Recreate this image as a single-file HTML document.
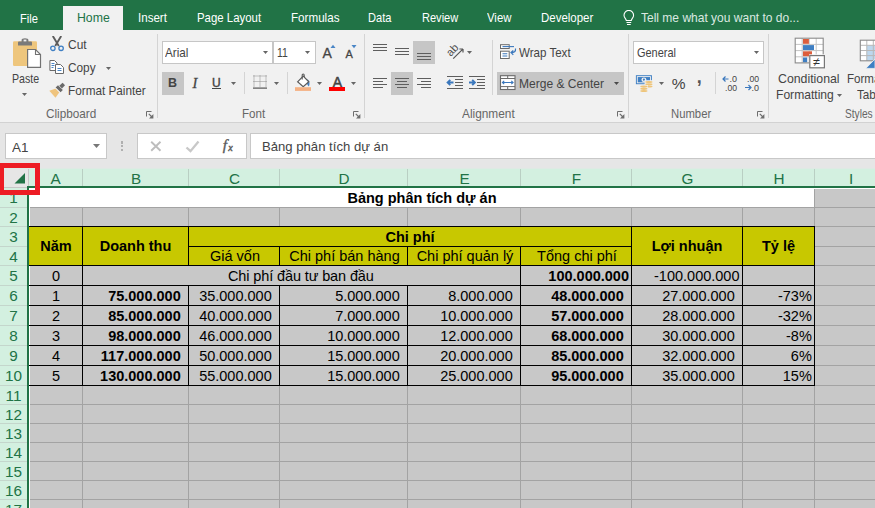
<!DOCTYPE html>
<html><head><meta charset="utf-8"><title>Excel</title>
<style>
*{box-sizing:border-box;margin:0;padding:0}
html,body{width:875px;height:508px;overflow:hidden;background:#e6e6e6;font-family:"Liberation Sans",sans-serif}
.a{position:absolute;display:block}
.t{position:absolute;white-space:nowrap;transform-origin:0 50%}
.c{position:absolute;white-space:nowrap;font-size:14.5px;line-height:19px;color:#000;transform:scaleY(1.03);transform-origin:50% 74%}
.h{transform:none}
.b{font-weight:bold}
</style></head><body>
<div class="a" style="left:0px;top:0px;width:875px;height:30px;background:#217346;"></div>
<div class="a" style="left:63px;top:6px;width:60px;height:24px;background:#f1f1f1;"></div>
<div class="t" style="left:20.4px;top:10px;font-size:13px;line-height:17px;color:#fff;transform:scaleX(0.859);">File</div>
<div class="t" style="left:76.6px;top:9px;font-size:13px;line-height:17px;color:#217346;transform:scaleX(0.943);">Home</div>
<div class="t" style="left:138.1px;top:9px;font-size:13px;line-height:17px;color:#fff;transform:scaleX(0.889);">Insert</div>
<div class="t" style="left:196.7px;top:9px;font-size:13px;line-height:17px;color:#fff;transform:scaleX(0.878);">Page Layout</div>
<div class="t" style="left:290.5px;top:9px;font-size:13px;line-height:17px;color:#fff;transform:scaleX(0.895);">Formulas</div>
<div class="t" style="left:368.4px;top:9px;font-size:13px;line-height:17px;color:#fff;transform:scaleX(0.852);">Data</div>
<div class="t" style="left:421.5px;top:9px;font-size:13px;line-height:17px;color:#fff;transform:scaleX(0.849);">Review</div>
<div class="t" style="left:487.3px;top:9px;font-size:13px;line-height:17px;color:#fff;transform:scaleX(0.873);">View</div>
<div class="t" style="left:541.3px;top:9px;font-size:13px;line-height:17px;color:#fff;transform:scaleX(0.882);">Developer</div>
<svg class="a" style="left:622px;top:10px" width="14" height="17" viewBox="0 0 14 17"><path d="M4.300 10.500C4.300 9 2 8 2 5.200A4.800 4.800 0 0 1 11.600 5.200C11.600 8 9.300 9 9.300 10.500zM4.500 12.500H9.200M5 14.500H8.700" fill="none" stroke="#fff" stroke-width="1.100"/></svg>
<div class="t" style="left:640.6px;top:9px;font-size:13px;line-height:17px;color:#dbe9e1;transform:scaleX(0.924);">Tell me what you want to do...</div>
<div class="a" style="left:0px;top:30px;width:875px;height:92px;background:#f1f1f1;"></div>
<div class="a" style="left:0px;top:122px;width:875px;height:1px;background:#d2d2d2;"></div>
<div class="a" style="left:0px;top:123px;width:875px;height:45px;background:#e6e6e6;"></div>
<div class="t" style="left:11.8px;top:70px;font-size:13px;line-height:17px;color:#444444;transform:scaleX(0.818);">Paste</div>
<svg class="a" style="left:21px;top:92px" width="7" height="6" viewBox="0 0 7 6"><path d="M1 1h5l-2.5 3.0z" fill="#666"/></svg>
<div class="t" style="left:68.4px;top:36px;font-size:13px;line-height:17px;color:#444444;transform:scaleX(0.919);">Cut</div>
<div class="t" style="left:68.4px;top:59px;font-size:13px;line-height:17px;color:#444444;transform:scaleX(0.909);">Copy</div>
<svg class="a" style="left:105px;top:66px" width="7" height="6" viewBox="0 0 7 6"><path d="M1 1h5l-2.5 3.0z" fill="#666"/></svg>
<div class="t" style="left:68.4px;top:82px;font-size:13px;line-height:17px;color:#444444;transform:scaleX(0.904);">Format Painter</div>
<div class="t" style="left:45.5px;top:105px;font-size:13px;line-height:17px;color:#666666;transform:scaleX(0.904);">Clipboard</div>
<svg class="a" style="left:146px;top:110.5px" width="8" height="8" viewBox="0 0 8 8"><path d="M0.5 5.5V0.5H5.5" fill="none" stroke="#6e6e6e" stroke-width="1"/><path d="M2.8 2.8L6 6" fill="none" stroke="#6e6e6e" stroke-width="1.200"/><path d="M7.400 3V7.400H3z" fill="#6e6e6e"/></svg>
<div class="a" style="left:157px;top:34px;width:1px;height:84px;background:#d4d4d4;"></div>
<svg class="a" style="left:12px;top:37px" width="31" height="32" viewBox="0 0 31 32">
<rect x="1" y="4.2" width="24" height="24.8" rx="1.2" fill="#eec67d"/>
<path d="M6 8.4V5.6q0-1 1-1h2.6V3q0-1.8 3.4-1.8T16.400 3V4.600H19q1 0 1 1V8.400z" fill="#7a7a7a"/>
<rect x="11.600" y="2.600" width="2.8" height="1.800" fill="#f1f1f1"/>
<path d="M15.600 12.500h7.900l5 5V30.400H15.600z" fill="#fff" stroke="#727272" stroke-width="1.200"/>
<path d="M23.500 12.500V17.500h5" fill="none" stroke="#727272" stroke-width="1.100"/>
</svg>
<svg class="a" style="left:49px;top:36px" width="16" height="16" viewBox="0 0 16 16">
<path d="M3.800 0L9.800 10M12.200 0L6.200 10" stroke="#5c5c5c" stroke-width="1.900" fill="none"/>
<circle cx="3.900" cy="12.300" r="2.200" fill="#f1f1f1" stroke="#3f7fc3" stroke-width="1.300"/>
<circle cx="12.100" cy="12.300" r="2.200" fill="#f1f1f1" stroke="#3f7fc3" stroke-width="1.300"/>
</svg>
<svg class="a" style="left:49px;top:59px" width="16" height="16" viewBox="0 0 16 16">
<path d="M0.900 1.500H5.500L8 4V11.500H0.900z" fill="#fff" stroke="#6a6a6a" stroke-width="1"/>
<path d="M2.500 4.500h3M2.500 6.500h3M2.500 8.500h2" stroke="#4a86c6" stroke-width="1"/>
<path d="M6.500 5.500H11.500L14.500 8.500V14.500H6.500z" fill="#fff" stroke="#6a6a6a" stroke-width="1"/>
<path d="M8.500 9.500h4M8.500 11.500h4" stroke="#4a86c6" stroke-width="1"/>
</svg>
<svg class="a" style="left:49px;top:82px" width="17" height="16" viewBox="0 0 17 16">
<path d="M0.300 8.800L6.800 6.600L10.400 10.200L6.500 15.800z" fill="#efc47e"/>
<path d="M6.600 5.400L9 3.200L13.800 8L11.600 10.200z" fill="#6a6a6a"/>
<path d="M10.300 3.800L13.600 0.800L16 3.200L13 6.500z" fill="#6a6a6a"/>
<path d="M6.400 6L10.900 10.600" stroke="#f1f1f1" stroke-width="0.900"/>
</svg>
<div class="a" style="left:162px;top:41px;width:111px;height:23px;background:#fff;border:1px solid #c6c6c6"></div>
<div class="t" style="left:165.2px;top:44px;font-size:13px;line-height:17px;color:#444444;transform:scaleX(0.899);">Arial</div>
<svg class="a" style="left:262px;top:50px" width="7" height="6" viewBox="0 0 7 6"><path d="M1 1h5l-2.5 3.0z" fill="#666"/></svg>
<div class="a" style="left:273px;top:41px;width:43px;height:23px;background:#fff;border:1px solid #c6c6c6"></div>
<div class="t" style="left:276.6px;top:44px;font-size:13px;line-height:17px;color:#444444;transform:scaleX(0.800);">11</div>
<svg class="a" style="left:304px;top:50px" width="7" height="6" viewBox="0 0 7 6"><path d="M1 1h5l-2.5 3.0z" fill="#666"/></svg>
<div class="t" style="left:307.1px;width:40px;text-align:center;top:44px;font-size:14px;line-height:18px;color:#444444;-webkit-text-stroke:0.3px #444;">A</div>
<svg class="a" style="left:330px;top:44px" width="6" height="5" viewBox="0 0 6 5"><path d="M0.500 4L3 0.800L5.500 4z" fill="#4a86c6"/></svg>
<div class="t" style="left:329.1px;width:40px;text-align:center;top:47px;font-size:11px;line-height:14px;color:#444444;-webkit-text-stroke:0.3px #444;">A</div>
<svg class="a" style="left:351px;top:44px" width="6" height="5" viewBox="0 0 6 5"><path d="M0.500 1L3 4.200L5.500 1z" fill="#4a86c6"/></svg>
<div class="a" style="left:162px;top:72px;width:22px;height:23px;background:#c6c6c6;"></div>
<div class="t" style="left:152.4px;width:40px;text-align:center;top:75px;font-size:12.5px;line-height:16px;color:#444444;font-weight:bold;">B</div>
<div class="t" style="left:175.0px;width:40px;text-align:center;top:74px;font-size:14.5px;line-height:19px;color:#444444;font-style:italic;font-family:'Liberation Serif',serif;-webkit-text-stroke:0.3px #444;">I</div>
<div class="t" style="left:196.4px;width:40px;text-align:center;top:75px;font-size:12px;line-height:16px;color:#444444;-webkit-text-stroke:0.4px #444;">U</div>
<div class="a" style="left:212px;top:88px;width:9px;height:1px;background:#444444;"></div>
<svg class="a" style="left:230px;top:81px" width="7" height="6" viewBox="0 0 7 6"><path d="M1 1h5l-2.5 3.0z" fill="#666"/></svg>
<div class="a" style="left:244px;top:72px;width:1px;height:22px;background:#d4d4d4;"></div>
<svg class="a" style="left:253px;top:75px" width="15" height="15" viewBox="0 0 15 15">
<rect x="0.5" y="0.5" width="1" height="1" fill="#8c8c8c"/><rect x="0.5" y="2.5" width="1" height="1" fill="#8c8c8c"/><rect x="0.5" y="4.5" width="1" height="1" fill="#8c8c8c"/><rect x="0.5" y="6.5" width="1" height="1" fill="#8c8c8c"/><rect x="0.5" y="8.5" width="1" height="1" fill="#8c8c8c"/><rect x="0.5" y="10.5" width="1" height="1" fill="#8c8c8c"/><rect x="6.5" y="0.5" width="1" height="1" fill="#8c8c8c"/><rect x="6.5" y="2.5" width="1" height="1" fill="#8c8c8c"/><rect x="6.5" y="4.5" width="1" height="1" fill="#8c8c8c"/><rect x="6.5" y="6.5" width="1" height="1" fill="#8c8c8c"/><rect x="6.5" y="8.5" width="1" height="1" fill="#8c8c8c"/><rect x="6.5" y="10.5" width="1" height="1" fill="#8c8c8c"/><rect x="12.5" y="0.5" width="1" height="1" fill="#8c8c8c"/><rect x="12.5" y="2.5" width="1" height="1" fill="#8c8c8c"/><rect x="12.5" y="4.5" width="1" height="1" fill="#8c8c8c"/><rect x="12.5" y="6.5" width="1" height="1" fill="#8c8c8c"/><rect x="12.5" y="8.5" width="1" height="1" fill="#8c8c8c"/><rect x="12.5" y="10.5" width="1" height="1" fill="#8c8c8c"/><rect x="0.5" y="0.5" width="1" height="1" fill="#8c8c8c"/><rect x="2.5" y="0.5" width="1" height="1" fill="#8c8c8c"/><rect x="4.5" y="0.5" width="1" height="1" fill="#8c8c8c"/><rect x="6.5" y="0.5" width="1" height="1" fill="#8c8c8c"/><rect x="8.5" y="0.5" width="1" height="1" fill="#8c8c8c"/><rect x="10.5" y="0.5" width="1" height="1" fill="#8c8c8c"/><rect x="12.5" y="0.5" width="1" height="1" fill="#8c8c8c"/><rect x="0.5" y="6" width="1" height="1" fill="#8c8c8c"/><rect x="2.5" y="6" width="1" height="1" fill="#8c8c8c"/><rect x="4.5" y="6" width="1" height="1" fill="#8c8c8c"/><rect x="6.5" y="6" width="1" height="1" fill="#8c8c8c"/><rect x="8.5" y="6" width="1" height="1" fill="#8c8c8c"/><rect x="10.5" y="6" width="1" height="1" fill="#8c8c8c"/><rect x="12.5" y="6" width="1" height="1" fill="#8c8c8c"/>
<rect x="0" y="12.500" width="14" height="1.200" fill="#555"/>
</svg>
<svg class="a" style="left:273px;top:81px" width="7" height="6" viewBox="0 0 7 6"><path d="M1 1h5l-2.5 3.0z" fill="#666"/></svg>
<div class="a" style="left:287px;top:72px;width:1px;height:22px;background:#d4d4d4;"></div>
<svg class="a" style="left:294px;top:73px" width="19" height="19" viewBox="0 0 19 19">
<path d="M13.600 6.200q3 3 1.300 7.200q-1.800-1.500-2.300-4.500z" fill="#3f7fc3"/>
<path d="M3.600 8.800L9.200 3.200L14.800 8.800L9.200 13.600z" fill="#fff" stroke="#5a5a5a" stroke-width="1.200"/>
<path d="M8.200 6.500V2.200q0-1.200 1-1.200q1 0 1 1.200V4" fill="none" stroke="#5a5a5a" stroke-width="1.100"/>
<rect x="1" y="14.200" width="16" height="3.700" fill="#f4b183"/>
</svg>
<svg class="a" style="left:316px;top:81px" width="7" height="6" viewBox="0 0 7 6"><path d="M1 1h5l-2.5 3.0z" fill="#666"/></svg>
<div class="t" style="left:317.4px;width:40px;text-align:center;top:73px;font-size:14px;line-height:18px;color:#444444;-webkit-text-stroke:0.5px #444;">A</div>
<div class="a" style="left:329px;top:87px;width:16px;height:4px;background:#ff0000;"></div>
<svg class="a" style="left:350px;top:81px" width="7" height="6" viewBox="0 0 7 6"><path d="M1 1h5l-2.5 3.0z" fill="#666"/></svg>
<div class="t" style="left:241.6px;top:105px;font-size:13px;line-height:17px;color:#666666;transform:scaleX(0.892);">Font</div>
<svg class="a" style="left:353px;top:110.5px" width="8" height="8" viewBox="0 0 8 8"><path d="M0.5 5.5V0.5H5.5" fill="none" stroke="#6e6e6e" stroke-width="1"/><path d="M2.8 2.8L6 6" fill="none" stroke="#6e6e6e" stroke-width="1.200"/><path d="M7.400 3V7.400H3z" fill="#6e6e6e"/></svg>
<div class="a" style="left:364px;top:34px;width:1px;height:84px;background:#d4d4d4;"></div>
<svg class="a" style="left:373px;top:44px" width="14" height="9" viewBox="0 0 14 9"><rect x="0" y="0" width="14" height="1" fill="#5e5e5e"/><rect x="0" y="3" width="14" height="1" fill="#5e5e5e"/><rect x="0" y="6" width="14" height="1" fill="#5e5e5e"/></svg>
<svg class="a" style="left:395px;top:48px" width="14" height="9" viewBox="0 0 14 9"><rect x="0" y="0" width="14" height="1" fill="#5e5e5e"/><rect x="0" y="3" width="14" height="1" fill="#5e5e5e"/><rect x="0" y="6" width="14" height="1" fill="#5e5e5e"/></svg>
<div class="a" style="left:413px;top:41px;width:22px;height:23px;background:#c6c6c6;"></div>
<svg class="a" style="left:417px;top:53px" width="14" height="9" viewBox="0 0 14 9"><rect x="0" y="0" width="14" height="1" fill="#5e5e5e"/><rect x="0" y="3" width="14" height="1" fill="#5e5e5e"/><rect x="0" y="6" width="14" height="1" fill="#5e5e5e"/></svg>
<svg class="a" style="left:373px;top:78px" width="14" height="12" viewBox="0 0 14 12"><rect x="0" y="0" width="14" height="1" fill="#5e5e5e"/><rect x="0" y="3" width="10" height="1" fill="#5e5e5e"/><rect x="0" y="6" width="14" height="1" fill="#5e5e5e"/><rect x="0" y="9" width="10" height="1" fill="#5e5e5e"/></svg>
<div class="a" style="left:391px;top:72px;width:22px;height:23px;background:#c6c6c6;"></div>
<svg class="a" style="left:395px;top:78px" width="14" height="12" viewBox="0 0 14 12"><rect x="0.0" y="0" width="14" height="1" fill="#5e5e5e"/><rect x="2.0" y="3" width="10" height="1" fill="#5e5e5e"/><rect x="0.0" y="6" width="14" height="1" fill="#5e5e5e"/><rect x="2.0" y="9" width="10" height="1" fill="#5e5e5e"/></svg>
<svg class="a" style="left:417px;top:78px" width="14" height="12" viewBox="0 0 14 12"><rect x="0" y="0" width="14" height="1" fill="#5e5e5e"/><rect x="4" y="3" width="10" height="1" fill="#5e5e5e"/><rect x="0" y="6" width="14" height="1" fill="#5e5e5e"/><rect x="4" y="9" width="10" height="1" fill="#5e5e5e"/></svg>
<svg class="a" style="left:446px;top:44px" width="20" height="16" viewBox="0 0 20 16">
<text x="0" y="0" font-family="Liberation Sans, sans-serif" font-size="11" fill="#4d4d4d" transform="translate(4.800 13) rotate(-47)">ab</text>
<path d="M7.200 14.700L16.600 5.300M17 5h-3.600M17 5v3.600" stroke="#555" stroke-width="1.200" fill="none"/>
</svg>
<svg class="a" style="left:466px;top:50px" width="7" height="6" viewBox="0 0 7 6"><path d="M1 1h5l-2.5 3.0z" fill="#666"/></svg>
<svg class="a" style="left:446px;top:75px" width="18" height="15" viewBox="0 0 18 15">
<path d="M1 1.500H17M9 4.500H17M9 7.500H17M9 10.500H17M1 13.500H17" stroke="#5e5e5e" stroke-width="1"/>
<path d="M7.500 7.500H1.800M4.300 4.800L1.600 7.500L4.300 10.200" stroke="#3b78bd" stroke-width="1.900" fill="none"/>
</svg>
<svg class="a" style="left:468px;top:75px" width="18" height="15" viewBox="0 0 18 15">
<path d="M1 1.500H17M9 4.500H17M9 7.500H17M9 10.500H17M1 13.500H17" stroke="#5e5e5e" stroke-width="1"/>
<path d="M1 7.500H6.700M4.200 4.800L6.900 7.500L4.200 10.200" stroke="#3b78bd" stroke-width="1.900" fill="none"/>
</svg>
<div class="a" style="left:492px;top:40px;width:1px;height:55px;background:#d4d4d4;"></div>
<svg class="a" style="left:499px;top:43px" width="18" height="17" viewBox="0 0 18 17">
<rect x="1.500" y="1.700" width="8.700" height="3.800" fill="#fff" stroke="#6a6a6a"/>
<path d="M3.500 3.600H15" stroke="#3b78bd" stroke-width="1.100"/>
<rect x="1.500" y="8.200" width="8.700" height="7.300" fill="#fff" stroke="#6a6a6a"/>
<path d="M3.500 10.700H8.300M3.500 13H8.300" stroke="#3b78bd" stroke-width="1.100"/>
<path d="M16.500 5.500C17 8.500 15 9.600 12.200 9.600M14.300 7.500L12 9.600L14.300 11.800" stroke="#3b78bd" stroke-width="1.200" fill="none"/>
</svg>
<div class="t" style="left:519.2px;top:44px;font-size:13px;line-height:17px;color:#444444;transform:scaleX(0.889);">Wrap Text</div>
<div class="a" style="left:497px;top:72px;width:127px;height:23px;background:#c6c6c6;"></div>
<svg class="a" style="left:499px;top:75px" width="17" height="16" viewBox="0 0 17 16">
<rect x="1.500" y="0.700" width="14.500" height="13.800" fill="#fff" stroke="#6a6a6a" stroke-width="1.100"/>
<path d="M1.500 3.500H16M1.500 11.600H16M8.700 0.700V3.500M8.700 11.600V14.500" stroke="#6a6a6a" stroke-width="1"/>
<path d="M3.500 7.500H14M5.200 5.800L3.400 7.500L5.200 9.200M12.300 5.800L14.100 7.500L12.300 9.200" stroke="#3b78bd" stroke-width="1.100" fill="none"/>
</svg>
<div class="t" style="left:519.2px;top:75px;font-size:13px;line-height:17px;color:#444444;transform:scaleX(0.926);">Merge &amp; Center</div>
<svg class="a" style="left:613px;top:81px" width="7" height="6" viewBox="0 0 7 6"><path d="M1 1h5l-2.5 3.0z" fill="#4a4a4a"/></svg>
<div class="t" style="left:462.0px;top:105px;font-size:13px;line-height:17px;color:#666666;transform:scaleX(0.912);">Alignment</div>
<svg class="a" style="left:617px;top:110.5px" width="8" height="8" viewBox="0 0 8 8"><path d="M0.5 5.5V0.5H5.5" fill="none" stroke="#6e6e6e" stroke-width="1"/><path d="M2.8 2.8L6 6" fill="none" stroke="#6e6e6e" stroke-width="1.200"/><path d="M7.400 3V7.400H3z" fill="#6e6e6e"/></svg>
<div class="a" style="left:628px;top:34px;width:1px;height:84px;background:#d4d4d4;"></div>
<div class="a" style="left:633px;top:41px;width:131px;height:23px;background:#fff;border:1px solid #c6c6c6"></div>
<div class="t" style="left:636.6px;top:44px;font-size:13px;line-height:17px;color:#444444;transform:scaleX(0.843);">General</div>
<svg class="a" style="left:753px;top:50px" width="7" height="6" viewBox="0 0 7 6"><path d="M1 1h5l-2.5 3.0z" fill="#666"/></svg>
<svg class="a" style="left:635px;top:75px" width="19" height="18" viewBox="0 0 19 18">
<rect x="0.900" y="0.200" width="16" height="9" fill="#3f7fc3"/>
<rect x="2.300" y="1.600" width="13.200" height="6.200" fill="none" stroke="#f1f1f1" stroke-width="0.900"/>
<ellipse cx="8.900" cy="4.700" rx="2.500" ry="2.300" fill="#f1f1f1"/>
<circle cx="8.900" cy="4.700" r="1.100" fill="#3f7fc3"/>
<rect x="9.600" y="5.200" width="8.500" height="7.500" fill="#f1f1f1"/>
<ellipse cx="13.900" cy="7" rx="3.600" ry="1.100" fill="#eec57b"/>
<ellipse cx="13.900" cy="9.300" rx="3.600" ry="1.100" fill="#eec57b"/>
<ellipse cx="13.900" cy="11.500" rx="3.600" ry="1.100" fill="#eec57b"/>
<rect x="4.800" y="10" width="8" height="6.500" fill="#f1f1f1"/>
<ellipse cx="8.900" cy="11.600" rx="3.600" ry="1.100" fill="#eec57b"/>
<ellipse cx="8.900" cy="13.800" rx="3.600" ry="1.100" fill="#eec57b"/>
<ellipse cx="8.900" cy="16" rx="3.600" ry="1.100" fill="#eec57b"/>
</svg>
<svg class="a" style="left:658px;top:81px" width="7" height="6" viewBox="0 0 7 6"><path d="M1 1h5l-2.5 3.0z" fill="#666"/></svg>
<div class="t" style="left:658.6px;width:40px;text-align:center;top:74px;font-size:15.5px;line-height:20px;color:#444444;">%</div>
<div class="t" style="left:679.3px;width:40px;text-align:center;top:66px;font-size:18px;line-height:23px;color:#555;font-weight:bold;">,</div>
<div class="a" style="left:715px;top:72px;width:1px;height:22px;background:#d4d4d4;"></div>
<svg class="a" style="left:722px;top:75px" width="17" height="17" viewBox="0 0 17 17">
<text x="7.500" y="7.300" font-family="Liberation Sans, sans-serif" font-size="9" fill="#444" textLength="7.500" lengthAdjust="spacingAndGlyphs">.0</text>
<text x="3" y="15.500" font-family="Liberation Sans, sans-serif" font-size="9" fill="#444" textLength="12" lengthAdjust="spacingAndGlyphs">.00</text>
<path d="M6.500 4H1M3.500 1.500L1 4L3.500 6.500" stroke="#3b78bd" stroke-width="1.200" fill="none"/>
</svg>
<svg class="a" style="left:744px;top:75px" width="17" height="17" viewBox="0 0 17 17">
<text x="3" y="7.300" font-family="Liberation Sans, sans-serif" font-size="9" fill="#444" textLength="12" lengthAdjust="spacingAndGlyphs">.00</text>
<text x="7.500" y="15.500" font-family="Liberation Sans, sans-serif" font-size="9" fill="#444" textLength="7.500" lengthAdjust="spacingAndGlyphs">.0</text>
<path d="M1 12.500H7M4.500 10L7 12.500L4.500 15" stroke="#3b78bd" stroke-width="1.200" fill="none"/>
</svg>
<div class="t" style="left:670.6px;top:105px;font-size:13px;line-height:17px;color:#666666;transform:scaleX(0.869);">Number</div>
<svg class="a" style="left:757px;top:110.5px" width="8" height="8" viewBox="0 0 8 8"><path d="M0.5 5.5V0.5H5.5" fill="none" stroke="#6e6e6e" stroke-width="1"/><path d="M2.8 2.8L6 6" fill="none" stroke="#6e6e6e" stroke-width="1.200"/><path d="M7.400 3V7.400H3z" fill="#6e6e6e"/></svg>
<div class="a" style="left:768px;top:34px;width:1px;height:84px;background:#d4d4d4;"></div>
<svg class="a" style="left:794px;top:37px" width="32" height="32" viewBox="0 0 32 32">
<rect x="1.200" y="1.200" width="28" height="24.700" fill="#fff"/>
<path d="M1.200 7.400H29.200M1.200 13.600H29.200M1.200 19.800H29.200M8.200 1.200V25.900M15.200 1.200V25.900M22.200 1.200V25.900" stroke="#c4c4c4" stroke-width="1" fill="none"/>
<rect x="9" y="2" width="5.900" height="4.800" fill="#dc5e3c"/>
<rect x="9" y="8.100" width="11" height="4.900" fill="#3f7fc3"/>
<rect x="9" y="14.300" width="9" height="4.900" fill="#dc5e3c"/>
<rect x="9" y="20.500" width="4.200" height="4.900" fill="#3f7fc3"/>
<rect x="1.200" y="1.200" width="28" height="24.700" fill="none" stroke="#8a8a8a" stroke-width="1.100"/>
<rect x="15" y="17.300" width="17" height="14.500" fill="#f1f1f1"/>
<rect x="15.800" y="18.600" width="14.600" height="12.200" fill="#fff" stroke="#777" stroke-width="1.200"/>
<text x="19.200" y="29.300" font-family="Liberation Sans, sans-serif" font-size="12.500" fill="#333">≠</text>
</svg>
<div class="t" style="left:778.2px;top:70px;font-size:13px;line-height:17px;color:#444444;transform:scaleX(0.947);">Conditional</div>
<div class="t" style="left:775.7px;top:86px;font-size:13px;line-height:17px;color:#444444;transform:scaleX(0.930);">Formatting</div>
<svg class="a" style="left:836px;top:93px" width="7" height="6" viewBox="0 0 7 6"><path d="M1 1h5l-2.5 3.0z" fill="#666"/></svg>
<div class="t" style="left:847.4px;top:70px;font-size:13px;line-height:17px;color:#444444;transform:scaleX(0.890);">Format as</div>
<div class="t" style="left:857.0px;top:86px;font-size:13px;line-height:17px;color:#444444;transform:scaleX(0.901);">Table</div>
<svg class="a" style="left:859px;top:39px" width="16" height="30" viewBox="0 0 16 30">
<rect x="1.300" y="1.200" width="20" height="20.600" fill="#fff"/>
<rect x="7.800" y="6.300" width="14" height="15.500" fill="#bdd7ee"/>
<path d="M1.300 6.300H22M1.300 11.500H22M1.300 16.600H22M7.800 1.200V21.800M14.300 1.200V21.800" stroke="#b8b8b8" stroke-width="1" fill="none"/>
<rect x="1.300" y="1.200" width="20" height="20.600" fill="none" stroke="#8a8a8a" stroke-width="1.100"/>
<path d="M6.800 29.400L16 20V29.400z" fill="#3f7fc3" stroke="#f1f1f1" stroke-width="0.800"/>
</svg>
<div class="t" style="left:844.6px;top:105px;font-size:13px;line-height:17px;color:#666666;transform:scaleX(0.780);">Styles</div>
<div class="a" style="left:5px;top:133px;width:102px;height:26px;background:#fff;border:1px solid #c8c8c8"></div>
<div class="t" style="left:11.8px;top:139px;font-size:13px;line-height:17px;color:#444444;transform:scaleX(1.031);">A1</div>
<svg class="a" style="left:92px;top:143px" width="9" height="7" viewBox="0 0 9 7"><path d="M1 1h7l-3.5 4.0z" fill="#777"/></svg>
<div class="a" style="left:120.7px;top:141.4px;width:2.3px;height:2.2px;background:#b0b0b0;"></div>
<div class="a" style="left:120.7px;top:145.2px;width:2.3px;height:2.2px;background:#b0b0b0;"></div>
<div class="a" style="left:120.7px;top:149px;width:2.3px;height:2.2px;background:#b0b0b0;"></div>
<div class="a" style="left:137px;top:133px;width:110px;height:26px;background:#fff;border:1px solid #c8c8c8"></div>
<svg class="a" style="left:150px;top:140px" width="12" height="12" viewBox="0 0 12 12"><path d="M1.200 1.800L10.500 10.800M10.500 1.800L1.200 10.800" stroke="#bdbdbd" stroke-width="1.900" fill="none"/></svg>
<svg class="a" style="left:185px;top:140px" width="15" height="13" viewBox="0 0 15 13"><path d="M1.500 7.500L5.500 11.200L13.500 1.500" stroke="#c8c8c8" stroke-width="2.300" fill="none"/></svg>
<svg class="a" style="left:220px;top:136px" width="18" height="20" viewBox="0 0 18 20"><text x="2.800" y="13.800" font-family="Liberation Serif, serif" font-style="italic" font-size="15.500" fill="#5a5a5a" stroke="#5a5a5a" stroke-width="0.350">f</text><text x="8.300" y="14.600" font-family="Liberation Serif, serif" font-style="italic" font-size="10" fill="#5a5a5a" stroke="#5a5a5a" stroke-width="0.400">x</text></svg>
<div class="a" style="left:250px;top:133px;width:640px;height:26px;background:#fff;border:1px solid #c8c8c8"></div>
<div class="t" style="left:262.3px;top:138px;font-size:13px;line-height:17px;color:#444444;transform:scaleX(1.009);">Bảng phân tích dự án</div>
<div class="a" style="left:0px;top:168px;width:875px;height:1px;background:#dfeae4;"></div>
<div class="a" style="left:0px;top:186px;width:875px;height:322px;background:#c8c8c8;"></div>
<div class="a" style="left:0px;top:169px;width:875px;height:17px;background:#d3f0e0;"></div>
<div class="a" style="left:0px;top:186px;width:27px;height:322px;background:#d3f0e0;"></div>
<div class="a" style="left:0px;top:169px;width:28px;height:18px;background:#e6e6e6;"></div>
<div class="a" style="left:0px;top:187px;width:27px;height:1px;background:#c6c6c6;"></div>
<div class="a" style="left:82px;top:169px;width:1px;height:17px;background:#b9cfc3;"></div>
<div class="a" style="left:188px;top:169px;width:1px;height:17px;background:#b9cfc3;"></div>
<div class="a" style="left:279px;top:169px;width:1px;height:17px;background:#b9cfc3;"></div>
<div class="a" style="left:407px;top:169px;width:1px;height:17px;background:#b9cfc3;"></div>
<div class="a" style="left:520px;top:169px;width:1px;height:17px;background:#b9cfc3;"></div>
<div class="a" style="left:631px;top:169px;width:1px;height:17px;background:#b9cfc3;"></div>
<div class="a" style="left:742px;top:169px;width:1px;height:17px;background:#b9cfc3;"></div>
<div class="a" style="left:814px;top:169px;width:1px;height:17px;background:#b9cfc3;"></div>
<div class="a" style="left:28px;top:169px;width:1px;height:17px;background:#c6c6c6;"></div>
<div class="a" style="left:0px;top:207px;width:27px;height:1px;background:#c4d6cc;"></div>
<div class="a" style="left:0px;top:226px;width:27px;height:1px;background:#c4d6cc;"></div>
<div class="a" style="left:0px;top:246px;width:27px;height:1px;background:#c4d6cc;"></div>
<div class="a" style="left:0px;top:265px;width:27px;height:1px;background:#c4d6cc;"></div>
<div class="a" style="left:0px;top:285px;width:27px;height:1px;background:#c4d6cc;"></div>
<div class="a" style="left:0px;top:305px;width:27px;height:1px;background:#c4d6cc;"></div>
<div class="a" style="left:0px;top:325px;width:27px;height:1px;background:#c4d6cc;"></div>
<div class="a" style="left:0px;top:345px;width:27px;height:1px;background:#c4d6cc;"></div>
<div class="a" style="left:0px;top:365px;width:27px;height:1px;background:#c4d6cc;"></div>
<div class="a" style="left:0px;top:385px;width:27px;height:1px;background:#c4d6cc;"></div>
<div class="a" style="left:0px;top:404px;width:27px;height:1px;background:#c4d6cc;"></div>
<div class="a" style="left:0px;top:423px;width:27px;height:1px;background:#c4d6cc;"></div>
<div class="a" style="left:0px;top:442px;width:27px;height:1px;background:#c4d6cc;"></div>
<div class="a" style="left:0px;top:461px;width:27px;height:1px;background:#c4d6cc;"></div>
<div class="a" style="left:0px;top:480px;width:27px;height:1px;background:#c4d6cc;"></div>
<div class="a" style="left:0px;top:499px;width:27px;height:1px;background:#c4d6cc;"></div>
<div class="a" style="left:0px;top:518px;width:27px;height:1px;background:#c4d6cc;"></div>
<div class="a" style="left:27px;top:186px;width:848px;height:2px;background:#217346;"></div>
<div class="a" style="left:27px;top:186px;width:2px;height:322px;background:#217346;"></div>
<div class="a" style="left:82px;top:188px;width:1px;height:320px;background:#a3a3a3;"></div>
<div class="a" style="left:188px;top:188px;width:1px;height:320px;background:#a3a3a3;"></div>
<div class="a" style="left:279px;top:188px;width:1px;height:320px;background:#a3a3a3;"></div>
<div class="a" style="left:407px;top:188px;width:1px;height:320px;background:#a3a3a3;"></div>
<div class="a" style="left:520px;top:188px;width:1px;height:320px;background:#a3a3a3;"></div>
<div class="a" style="left:631px;top:188px;width:1px;height:320px;background:#a3a3a3;"></div>
<div class="a" style="left:742px;top:188px;width:1px;height:320px;background:#a3a3a3;"></div>
<div class="a" style="left:814px;top:188px;width:1px;height:320px;background:#a3a3a3;"></div>
<div class="a" style="left:29px;top:207px;width:846px;height:1px;background:#a3a3a3;"></div>
<div class="a" style="left:29px;top:226px;width:846px;height:1px;background:#a3a3a3;"></div>
<div class="a" style="left:29px;top:246px;width:846px;height:1px;background:#a3a3a3;"></div>
<div class="a" style="left:29px;top:265px;width:846px;height:1px;background:#a3a3a3;"></div>
<div class="a" style="left:29px;top:285px;width:846px;height:1px;background:#a3a3a3;"></div>
<div class="a" style="left:29px;top:305px;width:846px;height:1px;background:#a3a3a3;"></div>
<div class="a" style="left:29px;top:325px;width:846px;height:1px;background:#a3a3a3;"></div>
<div class="a" style="left:29px;top:345px;width:846px;height:1px;background:#a3a3a3;"></div>
<div class="a" style="left:29px;top:365px;width:846px;height:1px;background:#a3a3a3;"></div>
<div class="a" style="left:29px;top:385px;width:846px;height:1px;background:#a3a3a3;"></div>
<div class="a" style="left:29px;top:404px;width:846px;height:1px;background:#a3a3a3;"></div>
<div class="a" style="left:29px;top:423px;width:846px;height:1px;background:#a3a3a3;"></div>
<div class="a" style="left:29px;top:442px;width:846px;height:1px;background:#a3a3a3;"></div>
<div class="a" style="left:29px;top:461px;width:846px;height:1px;background:#a3a3a3;"></div>
<div class="a" style="left:29px;top:480px;width:846px;height:1px;background:#a3a3a3;"></div>
<div class="a" style="left:29px;top:499px;width:846px;height:1px;background:#a3a3a3;"></div>
<div class="a" style="left:29px;top:518px;width:846px;height:1px;background:#a3a3a3;"></div>
<div class="a" style="left:29px;top:188px;width:846px;height:1px;background:#fff;"></div>
<div class="a" style="left:29px;top:188px;width:1px;height:320px;background:#fff;"></div>
<div class="a" style="left:29px;top:188px;width:785px;height:19px;background:#fff;"></div>
<div class="a" style="left:83px;top:266px;width:437px;height:19px;background:#c8c8c8;"></div>
<div class="a" style="left:29px;top:227px;width:785px;height:38px;background:#c8c800;"></div>
<div class="a" style="left:29px;top:226px;width:786px;height:1px;background:#000;"></div>
<div class="a" style="left:29px;top:265px;width:786px;height:1px;background:#000;"></div>
<div class="a" style="left:29px;top:285px;width:786px;height:1px;background:#000;"></div>
<div class="a" style="left:29px;top:305px;width:786px;height:1px;background:#000;"></div>
<div class="a" style="left:29px;top:325px;width:786px;height:1px;background:#000;"></div>
<div class="a" style="left:29px;top:345px;width:786px;height:1px;background:#000;"></div>
<div class="a" style="left:29px;top:365px;width:786px;height:1px;background:#000;"></div>
<div class="a" style="left:29px;top:385px;width:786px;height:1px;background:#000;"></div>
<div class="a" style="left:188px;top:246px;width:443px;height:1px;background:#000;"></div>
<div class="a" style="left:82px;top:226px;width:1px;height:160px;background:#000;"></div>
<div class="a" style="left:631px;top:226px;width:1px;height:160px;background:#000;"></div>
<div class="a" style="left:742px;top:226px;width:1px;height:160px;background:#000;"></div>
<div class="a" style="left:814px;top:226px;width:1px;height:160px;background:#000;"></div>
<div class="a" style="left:188px;top:226px;width:1px;height:40px;background:#000;"></div>
<div class="a" style="left:188px;top:285px;width:1px;height:101px;background:#000;"></div>
<div class="a" style="left:279px;top:246px;width:1px;height:20px;background:#000;"></div>
<div class="a" style="left:279px;top:285px;width:1px;height:101px;background:#000;"></div>
<div class="a" style="left:407px;top:246px;width:1px;height:20px;background:#000;"></div>
<div class="a" style="left:407px;top:285px;width:1px;height:101px;background:#000;"></div>
<div class="a" style="left:520px;top:246px;width:1px;height:20px;background:#000;"></div>
<div class="a" style="left:520px;top:285px;width:1px;height:101px;background:#000;"></div>
<div class="a" style="left:520px;top:265px;width:1px;height:20px;background:#000;"></div>
<div class="t h" style="left:29px;width:53px;top:169px;text-align:center;font-size:15.3px;line-height:19px;color:#217346">A</div>
<div class="t h" style="left:83px;width:106px;top:169px;text-align:center;font-size:15.3px;line-height:19px;color:#217346">B</div>
<div class="t h" style="left:189px;width:91px;top:169px;text-align:center;font-size:15.3px;line-height:19px;color:#217346">C</div>
<div class="t h" style="left:280px;width:128px;top:169px;text-align:center;font-size:15.3px;line-height:19px;color:#217346">D</div>
<div class="t h" style="left:408px;width:113px;top:169px;text-align:center;font-size:15.3px;line-height:19px;color:#217346">E</div>
<div class="t h" style="left:521px;width:111px;top:169px;text-align:center;font-size:15.3px;line-height:19px;color:#217346">F</div>
<div class="t h" style="left:632px;width:111px;top:169px;text-align:center;font-size:15.3px;line-height:19px;color:#217346">G</div>
<div class="t h" style="left:743px;width:72px;top:169px;text-align:center;font-size:15.3px;line-height:19px;color:#217346">H</div>
<div class="t h" style="left:815px;width:72px;top:169px;text-align:center;font-size:15.3px;line-height:19px;color:#217346">I</div>
<div class="t h" style="left:0;width:27px;top:187.3px;text-align:center;font-size:15.3px;line-height:21px;color:#217346">1</div>
<div class="t h" style="left:0;width:27px;top:207px;text-align:center;font-size:15.3px;line-height:21px;color:#217346">2</div>
<div class="t h" style="left:0;width:27px;top:226px;text-align:center;font-size:15.3px;line-height:22px;color:#217346">3</div>
<div class="t h" style="left:0;width:27px;top:246px;text-align:center;font-size:15.3px;line-height:21px;color:#217346">4</div>
<div class="t h" style="left:0;width:27px;top:265px;text-align:center;font-size:15.3px;line-height:22px;color:#217346">5</div>
<div class="t h" style="left:0;width:27px;top:285px;text-align:center;font-size:15.3px;line-height:22px;color:#217346">6</div>
<div class="t h" style="left:0;width:27px;top:305px;text-align:center;font-size:15.3px;line-height:22px;color:#217346">7</div>
<div class="t h" style="left:0;width:27px;top:325px;text-align:center;font-size:15.3px;line-height:22px;color:#217346">8</div>
<div class="t h" style="left:0;width:27px;top:345px;text-align:center;font-size:15.3px;line-height:22px;color:#217346">9</div>
<div class="t h" style="left:0;width:27px;top:365px;text-align:center;font-size:15.3px;line-height:22px;color:#217346">10</div>
<div class="t h" style="left:0;width:27px;top:385px;text-align:center;font-size:15.3px;line-height:21px;color:#217346">11</div>
<div class="t h" style="left:0;width:27px;top:404px;text-align:center;font-size:15.3px;line-height:21px;color:#217346">12</div>
<div class="t h" style="left:0;width:27px;top:423px;text-align:center;font-size:15.3px;line-height:21px;color:#217346">13</div>
<div class="t h" style="left:0;width:27px;top:442px;text-align:center;font-size:15.3px;line-height:21px;color:#217346">14</div>
<div class="t h" style="left:0;width:27px;top:461px;text-align:center;font-size:15.3px;line-height:21px;color:#217346">15</div>
<div class="t h" style="left:0;width:27px;top:480px;text-align:center;font-size:15.3px;line-height:21px;color:#217346">16</div>
<div class="t h" style="left:0;width:27px;top:499px;text-align:center;font-size:15.3px;line-height:21px;color:#217346">17</div>
<div class="c b" style="left:30px;top:189px;width:784px;height:18px;line-height:19px;text-align:center;">Bảng phân tích dự án</div>
<div class="c b" style="left:30px;top:227px;width:52px;height:38px;line-height:39px;text-align:center;">Năm</div>
<div class="c b" style="left:83px;top:227px;width:105px;height:38px;line-height:39px;text-align:center;">Doanh thu</div>
<div class="c b" style="left:189px;top:227px;width:442px;height:19px;line-height:20px;text-align:center;">Chi phí</div>
<div class="c" style="left:190px;top:247px;width:90px;height:18px;line-height:19px;text-align:center;">Giá vốn</div>
<div class="c" style="left:281px;top:247px;width:127px;height:18px;line-height:19px;text-align:center;">Chi phí bán hàng</div>
<div class="c" style="left:409px;top:247px;width:112px;height:18px;line-height:19px;text-align:center;">Chi phí quản lý</div>
<div class="c" style="left:522px;top:247px;width:110px;height:18px;line-height:19px;text-align:center;">Tổng chi phí</div>
<div class="c b" style="left:632px;top:227px;width:110px;height:38px;line-height:39px;text-align:center;">Lợi nhuận</div>
<div class="c b" style="left:743px;top:227px;width:71px;height:38px;line-height:39px;text-align:center;">Tỷ lệ</div>
<div class="c" style="left:30px;top:266px;width:52px;height:19px;line-height:20px;text-align:center;">0</div>
<div class="c" style="left:228px;top:266px;height:19px;line-height:20px;letter-spacing:-0.12px">Chi phí đầu tư ban đầu</div>
<div class="c b" style="left:521px;top:266px;width:110px;height:19px;line-height:20px;text-align:right;padding-right:2px;font-size:14.5px;">100.000.000</div>
<div class="c" style="left:632px;top:266px;width:110px;height:19px;line-height:20px;text-align:right;padding-right:2.5px;font-size:14.5px;">-100.000.000</div>
<div class="c" style="left:30px;top:286px;width:52px;height:19px;line-height:20px;text-align:center;">1</div>
<div class="c b" style="left:83px;top:286px;width:105px;height:19px;line-height:20px;text-align:right;padding-right:7.3px;font-size:14.5px;">75.000.000</div>
<div class="c" style="left:189px;top:286px;width:90px;height:19px;line-height:20px;text-align:right;padding-right:7.3px;font-size:14.5px;">35.000.000</div>
<div class="c" style="left:280px;top:286px;width:127px;height:19px;line-height:20px;text-align:right;padding-right:7.3px;font-size:14.5px;">5.000.000</div>
<div class="c" style="left:408px;top:286px;width:112px;height:19px;line-height:20px;text-align:right;padding-right:7.3px;font-size:14.5px;">8.000.000</div>
<div class="c b" style="left:521px;top:286px;width:110px;height:19px;line-height:20px;text-align:right;padding-right:7.3px;font-size:14.5px;">48.000.000</div>
<div class="c" style="left:632px;top:286px;width:110px;height:19px;line-height:20px;text-align:right;padding-right:7.3px;font-size:14.5px;">27.000.000</div>
<div class="c" style="left:743px;top:286px;width:71px;height:19px;line-height:20px;text-align:right;padding-right:2.2px;font-size:14.5px;">-73%</div>
<div class="c" style="left:30px;top:306px;width:52px;height:19px;line-height:20px;text-align:center;">2</div>
<div class="c b" style="left:83px;top:306px;width:105px;height:19px;line-height:20px;text-align:right;padding-right:7.3px;font-size:14.5px;">85.000.000</div>
<div class="c" style="left:189px;top:306px;width:90px;height:19px;line-height:20px;text-align:right;padding-right:7.3px;font-size:14.5px;">40.000.000</div>
<div class="c" style="left:280px;top:306px;width:127px;height:19px;line-height:20px;text-align:right;padding-right:7.3px;font-size:14.5px;">7.000.000</div>
<div class="c" style="left:408px;top:306px;width:112px;height:19px;line-height:20px;text-align:right;padding-right:7.3px;font-size:14.5px;">10.000.000</div>
<div class="c b" style="left:521px;top:306px;width:110px;height:19px;line-height:20px;text-align:right;padding-right:7.3px;font-size:14.5px;">57.000.000</div>
<div class="c" style="left:632px;top:306px;width:110px;height:19px;line-height:20px;text-align:right;padding-right:7.3px;font-size:14.5px;">28.000.000</div>
<div class="c" style="left:743px;top:306px;width:71px;height:19px;line-height:20px;text-align:right;padding-right:2.2px;font-size:14.5px;">-32%</div>
<div class="c" style="left:30px;top:326px;width:52px;height:19px;line-height:20px;text-align:center;">3</div>
<div class="c b" style="left:83px;top:326px;width:105px;height:19px;line-height:20px;text-align:right;padding-right:7.3px;font-size:14.5px;">98.000.000</div>
<div class="c" style="left:189px;top:326px;width:90px;height:19px;line-height:20px;text-align:right;padding-right:7.3px;font-size:14.5px;">46.000.000</div>
<div class="c" style="left:280px;top:326px;width:127px;height:19px;line-height:20px;text-align:right;padding-right:7.3px;font-size:14.5px;">10.000.000</div>
<div class="c" style="left:408px;top:326px;width:112px;height:19px;line-height:20px;text-align:right;padding-right:7.3px;font-size:14.5px;">12.000.000</div>
<div class="c b" style="left:521px;top:326px;width:110px;height:19px;line-height:20px;text-align:right;padding-right:7.3px;font-size:14.5px;">68.000.000</div>
<div class="c" style="left:632px;top:326px;width:110px;height:19px;line-height:20px;text-align:right;padding-right:7.3px;font-size:14.5px;">30.000.000</div>
<div class="c" style="left:743px;top:326px;width:71px;height:19px;line-height:20px;text-align:right;padding-right:2.2px;font-size:14.5px;">-8%</div>
<div class="c" style="left:30px;top:346px;width:52px;height:19px;line-height:20px;text-align:center;">4</div>
<div class="c b" style="left:83px;top:346px;width:105px;height:19px;line-height:20px;text-align:right;padding-right:7.3px;font-size:14.5px;">117.000.000</div>
<div class="c" style="left:189px;top:346px;width:90px;height:19px;line-height:20px;text-align:right;padding-right:7.3px;font-size:14.5px;">50.000.000</div>
<div class="c" style="left:280px;top:346px;width:127px;height:19px;line-height:20px;text-align:right;padding-right:7.3px;font-size:14.5px;">15.000.000</div>
<div class="c" style="left:408px;top:346px;width:112px;height:19px;line-height:20px;text-align:right;padding-right:7.3px;font-size:14.5px;">20.000.000</div>
<div class="c b" style="left:521px;top:346px;width:110px;height:19px;line-height:20px;text-align:right;padding-right:7.3px;font-size:14.5px;">85.000.000</div>
<div class="c" style="left:632px;top:346px;width:110px;height:19px;line-height:20px;text-align:right;padding-right:7.3px;font-size:14.5px;">32.000.000</div>
<div class="c" style="left:743px;top:346px;width:71px;height:19px;line-height:20px;text-align:right;padding-right:2.2px;font-size:14.5px;">6%</div>
<div class="c" style="left:30px;top:366px;width:52px;height:19px;line-height:20px;text-align:center;">5</div>
<div class="c b" style="left:83px;top:366px;width:105px;height:19px;line-height:20px;text-align:right;padding-right:7.3px;font-size:14.5px;">130.000.000</div>
<div class="c" style="left:189px;top:366px;width:90px;height:19px;line-height:20px;text-align:right;padding-right:7.3px;font-size:14.5px;">55.000.000</div>
<div class="c" style="left:280px;top:366px;width:127px;height:19px;line-height:20px;text-align:right;padding-right:7.3px;font-size:14.5px;">15.000.000</div>
<div class="c" style="left:408px;top:366px;width:112px;height:19px;line-height:20px;text-align:right;padding-right:7.3px;font-size:14.5px;">25.000.000</div>
<div class="c b" style="left:521px;top:366px;width:110px;height:19px;line-height:20px;text-align:right;padding-right:7.3px;font-size:14.5px;">95.000.000</div>
<div class="c" style="left:632px;top:366px;width:110px;height:19px;line-height:20px;text-align:right;padding-right:7.3px;font-size:14.5px;">35.000.000</div>
<div class="c" style="left:743px;top:366px;width:71px;height:19px;line-height:20px;text-align:right;padding-right:2.2px;font-size:14.5px;">15%</div>
<div class="a" style="left:0;top:163px;width:40px;height:32px;border:5px solid #ed1c24;border-left-width:4px"></div>
<svg class="a" style="left:14px;top:172px" width="12" height="13" viewBox="0 0 12 13"><path d="M11 1V11.500H0.500z" fill="#217346"/></svg>
</body></html>
